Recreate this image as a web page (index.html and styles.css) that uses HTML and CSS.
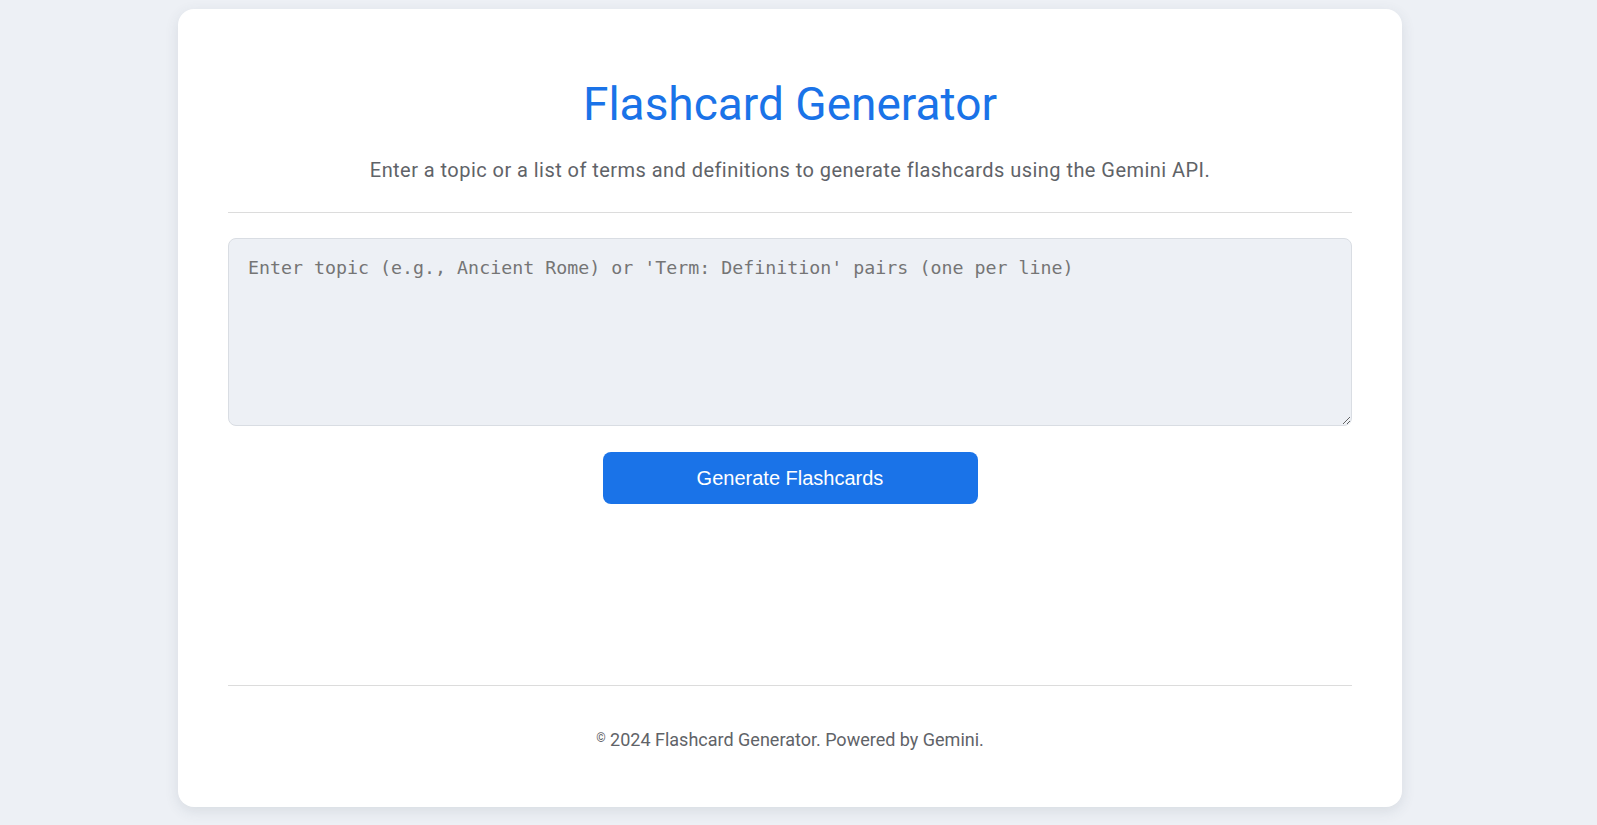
FILE: index.html
```html
<!DOCTYPE html>
<html lang="en">
<head>
<meta charset="utf-8">
<title>Flashcard Generator</title>
<link rel="stylesheet" href="styles.css">
</head>
<body>
<main class="card">
  <header class="intro">
    <h1 class="title">Flashcard Generator</h1>
    <p class="subtitle">Enter a topic or a list of terms and definitions to generate flashcards using the Gemini API.</p>
  </header>
  <section class="input-area">
    <textarea class="topic-input" placeholder="Enter topic (e.g., Ancient Rome) or 'Term: Definition' pairs (one per line)"></textarea>
    <button class="generate-btn" type="button">Generate Flashcards</button>
  </section>
  <section class="flashcards"></section>
  <footer class="footer">
    <p class="footer-text"><span class="copy">©</span> 2024 Flashcard Generator. Powered by Gemini.</p>
  </footer>
</main>
</body>
</html>
```

FILE: styles.css
```css
html, body {
  margin: 0;
  padding: 0;
}
body {
  background: #edf0f5;
  font-family: Roboto, "Open Sans", sans-serif;
  padding: 9px 17px 19px 0;
}
.card {
  box-sizing: border-box;
  width: 1224px;
  margin: 0 auto;
  background: #ffffff;
  border-radius: 16px;
  box-shadow: 0 4px 14px rgba(60, 70, 90, 0.12);
  padding: 50px 50px 57px;
}
.intro {
  text-align: center;
  border-bottom: 1px solid #dcdcdc;
  padding-bottom: 28px;
}
.title {
  margin: 18px 0 0;
  font-size: 46px;
  font-weight: 400;
  line-height: 1.2;
  color: #1a73e8;
}
.subtitle {
  margin: 24px 0 0;
  font-size: 20px;
  letter-spacing: 0.45px;
  line-height: 1.4;
  color: #5f6368;
}
.input-area {
  display: flex;
  flex-direction: column;
  align-items: center;
  gap: 26px;
  margin-top: 25px;
}
.topic-input {
  box-sizing: border-box;
  width: 100%;
  height: 188px;
  background: #edf0f5;
  border: 1px solid #d9dde3;
  border-radius: 8px;
  padding: 16px 19px;
  font-family: "DejaVu Sans Mono", monospace;
  font-size: 18.3px;
  line-height: 1.4;
  color: #333;
  resize: vertical;
  outline: none;
}
.topic-input::placeholder {
  color: #757575;
}
.generate-btn {
  width: 375px;
  height: 52px;
  border: none;
  border-radius: 8px;
  background: #1a73e8;
  color: #ffffff;
  font-family: "Liberation Sans", Arial, sans-serif;
  font-size: 20px;
}
.flashcards {
  min-height: 181px;
}
.footer {
  border-top: 1px solid #dcdcdc;
  text-align: center;
  padding-top: 43px;
}
.footer-text {
  margin: 0;
  font-size: 18px;
  color: #5f6368;
}
.copy {
  font-size: 12px;
  vertical-align: 4px;
}
```
